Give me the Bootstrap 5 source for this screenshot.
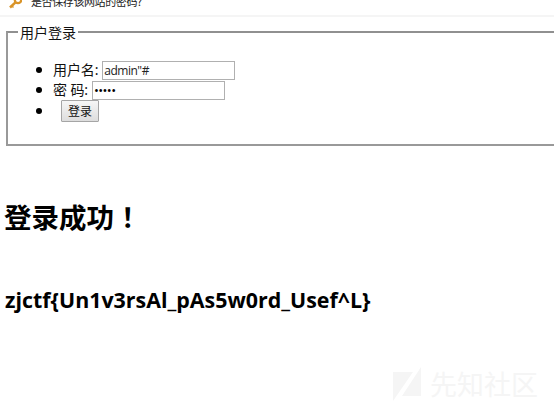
<!DOCTYPE html>
<html lang="zh">
<head>
<meta charset="utf-8">
<title>用户登录</title>
<link href="https://cdn.jsdelivr.net/npm/bootstrap@5.3.0/dist/css/bootstrap.min.css" rel="stylesheet">
<style>
body{font-family:"Noto Sans","Noto Sans CJK SC",sans-serif;font-size:14px;color:#111;height:404px}
.cjk{font-family:"Noto Sans CJK SC",sans-serif}
.save-bar{height:17px;border-bottom:2px solid #f5f5f5;padding-left:8px}
.save-bar svg{flex:none;margin-right:9px}
.save-text{font-size:11px;line-height:16px;margin-top:-7px;letter-spacing:-.4px;color:#222}
.login-box{margin:6px 0 0 6px;height:123px;border:2px solid #999;border-right:0;border-top-color:#909090;padding:0 0 0 46px}
.login-box legend{float:none;width:auto;font-size:14px;line-height:18px;margin:0 0 0 -36px;padding:0 2px}
.login-list{margin-top:19px}
.login-list li{height:20px;line-height:20px}
.login-list li::before{content:"";flex:none;width:6px;height:6px;border-radius:50%;background:#000;margin:0 11px 0 -18px}
.login-list li.send{height:22px}
.login-list label{margin-right:4px;letter-spacing:-.1px}
.field{width:133px;height:19px;border:1px solid #b0b0b0;border-radius:0;padding:0 1px;font:12px "Open Sans",sans-serif;letter-spacing:-.5px;color:#222}
.field.pw{font-size:13px;letter-spacing:-.6px;color:#000}
.send-btn{width:38px;height:22px;border:1px solid #a5a5a5;border-radius:1px;padding:0;font-size:12px;line-height:18px;background:linear-gradient(#f6f6f6,#ddd);color:#111;margin-left:8px}
.done{font-size:27.5px;line-height:36px;font-weight:700;margin:52px 0 0 4px;color:#000}
.full-stop{font-family:"Noto Sans CJK TC",sans-serif}
.flag{font-family:"Open Sans","Noto Sans",sans-serif;font-size:21.4px;line-height:28px;font-weight:700;margin:52px 0 0 5px;white-space:nowrap;color:#000}
.site-mark{margin:52px 16px 0 0;color:#f5f5f5;font-size:27px;line-height:36px}
</style>
</head>
<body class="bg-white overflow-hidden">
<div class="save-bar d-flex align-items-start overflow-hidden">
<svg width="14" height="9" viewBox="0 0 14 9"><path d="M2 7.5 8 1.8" stroke="#d99429" stroke-width="2.5"/><path d="m3.5 5.5 2 2" stroke="#d99429" stroke-width="1.5"/><circle cx="10" cy="0" r="3.2" fill="none" stroke="#d99429" stroke-width="2.3"/></svg>
<span class="save-text cjk text-nowrap">是否保存该网站的密码?</span>
</div>
<form onsubmit="return false">
<fieldset class="login-box">
<legend class="cjk">用户登录</legend>
<ul class="login-list list-unstyled mb-0">
<li class="d-flex align-items-center"><label for="u">用户名:</label><input class="field" id="u" value="admin&quot;#"></li>
<li class="d-flex align-items-center"><label for="p">密 码:</label><input class="field pw" id="p" type="password" value="admin"></li>
<li class="d-flex align-items-center send"><button class="send-btn cjk">登录</button></li>
</ul>
</fieldset>
</form>
<h1 class="done cjk">登录成功<span class="full-stop" lang="zh-TW">！</span></h1>
<h2 class="flag">zjctf{Un1v3rsAl_pAs5w0rd_Usef^L}</h2>
<div class="site-mark cjk d-flex justify-content-end align-items-center">
<svg class="me-2" width="29" height="34" viewBox="0 0 29 34" fill="currentColor"><path d="M0 5h20L0 34zM28 0v29H9z"/></svg><span>先知社区</span>
</div>
<script src="https://cdn.jsdelivr.net/npm/bootstrap@5.3.0/dist/js/bootstrap.bundle.min.js"></script>
</body>
</html>
